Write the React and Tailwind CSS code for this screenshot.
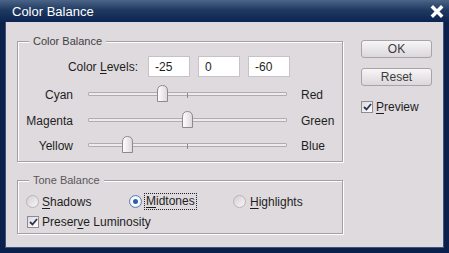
import React from 'react';

const sliders = [
  { left: 'Cyan', right: 'Red', value: -25, gap: 'mt-[8px]' },
  { left: 'Magenta', right: 'Green', value: 0, gap: 'mt-[9px]' },
  { left: 'Yellow', right: 'Blue', value: -60, gap: 'mt-[8px]' },
];

const levels = ['-25', '0', '-60'];

const Check = () => (
  <span className="w-[12px] h-[12px] shrink-0 border border-[#8f8b90] bg-[linear-gradient(135deg,#dcd9dd,#ffffff)] flex items-center justify-center">
    <svg width="9" height="8" viewBox="0 0 9 8">
      <path d="M1 4 L3.5 6.5 L8 1" fill="none" stroke="#2a3552" strokeWidth="1.8" />
    </svg>
  </span>
);

const Radio = ({ checked }) => (
  <span
    className={`w-[13px] h-[13px] shrink-0 rounded-full border flex items-center justify-center ${
      checked
        ? 'border-[#5d7fae] bg-[radial-gradient(circle,#ffffff_40%,#c9d8ee_100%)]'
        : 'border-[#b8b4b9] bg-[linear-gradient(135deg,#d4d0d5,#f6f5f6)]'
    }`}
  >
    {checked && <span className="w-[5px] h-[5px] rounded-full bg-[#2d5fae]" />}
  </span>
);

const Slider = ({ value }) => (
  <div className="relative w-[199px] h-[17px]">
    <div className="absolute left-0 right-0 top-[7px] h-[4px] border border-[#b0acb0] bg-[#eeebee] rounded-[1px]" />
    <div className="absolute left-[99px] top-[8px] w-[1px] h-[5px] bg-[#8d898d]" />
    <svg
      className="absolute top-0"
      style={{ left: 99.5 + value - 5.5 }}
      width="11"
      height="17"
      viewBox="0 0 11 17"
    >
      <defs>
        <linearGradient id="thumb" x1="0" y1="0" x2="1" y2="0">
          <stop offset="0" stopColor="#ffffff" />
          <stop offset="1" stopColor="#dcd8dc" />
        </linearGradient>
      </defs>
      <path d="M0.5 16.5 V6 Q0.5 0.5 5.5 0.5 Q10.5 0.5 10.5 6 V16.5 Z" fill="url(#thumb)" stroke="#8d898e" />
    </svg>
  </div>
);

const groupBox =
  'border border-[#a39fa4] shadow-[inset_1px_1px_0_#ffffff,1px_1px_0_#ffffff]';

export default function App() {
  return (
    <div className="w-[449px] h-[253px] bg-[#0b214b] flex flex-col font-['Liberation_Sans',Arial,sans-serif] text-[12px] text-[#1e1e1e]">
      {/* title bar */}
      <div className="h-[22px] shrink-0 flex items-center justify-between pl-[12px] pr-[5px] bg-[linear-gradient(to_bottom,#4b6487_0%,#1f3a62_45%,#0c2450_100%)]">
        <span className="text-white text-[13px] leading-none">Color Balance</span>
        <svg width="14" height="13" viewBox="0 0 14 13">
          <path d="M3 2.5 L11 10.5 M11 2.5 L3 10.5" stroke="#ffffff" strokeWidth="3.4" strokeLinecap="square" />
        </svg>
      </div>

      <div className="flex-1 mx-[5px] mb-[5px] border-x border-b border-[#3d5680] bg-[#dedadd] flex">
        {/* left column */}
        <div className="w-[337px] pl-[11px] pt-[12px]">
          <fieldset className={`w-[326px] pb-[8px] ${groupBox}`}>
            <legend className="ml-[11px] px-[4px] leading-[14px] text-[11px] text-[#444144] bg-[#dedadd]">Color Balance</legend>

            <div className="mt-[8px] flex items-center h-[21px]">
              <span className="w-[120px] text-right">
                Color <u className="underline-offset-2">L</u>evels:
              </span>
              <div className="ml-[10px] flex gap-[8px]">
                {levels.map((v, i) => (
                  <div
                    key={i}
                    className="w-[42px] h-[21px] bg-white border border-[#c6c2c7] pl-[6px] flex items-center"
                  >
                    {v}
                  </div>
                ))}
              </div>
            </div>

            {sliders.map((s) => (
              <div key={s.left} className={`${s.gap} flex items-center h-[17px]`}>
                <span className="w-[55px] text-right pt-[3px]">{s.left}</span>
                <div className="ml-[15px]">
                  <Slider value={s.value} />
                </div>
                <span className="ml-[14px] pt-[3px]">{s.right}</span>
              </div>
            ))}
          </fieldset>

          <fieldset className={`mt-[11px] w-[326px] pb-[3px] ${groupBox}`}>
            <legend className="ml-[11px] px-[4px] leading-[14px] text-[11px] text-[#5a575a] bg-[#dedadd]">Tone Balance</legend>

            <div className="mt-[6px] h-[17px] pl-[8px] flex items-center">
              <div className="w-[103px] flex items-center gap-[3px]">
                <Radio />
                <span>
                  <u className="underline-offset-2">S</u>hadows
                </span>
              </div>
              <div className="w-[104px] flex items-center gap-[2px]">
                <Radio checked />
                <span className="border border-dotted border-[#222] px-[1px] leading-[15px]">
                  <u className="underline-offset-2">M</u>idtones
                </span>
              </div>
              <div className="flex items-center gap-[4px]">
                <Radio />
                <span>
                  <u className="underline-offset-2">H</u>ighlights
                </span>
              </div>
            </div>

            <div className="mt-[4px] h-[16px] pl-[9px] flex items-center gap-[3px]">
              <Check />
              <span>
                Preser<u className="underline-offset-2">v</u>e Luminosity
              </span>
            </div>
          </fieldset>
        </div>

        {/* right column */}
        <div className="flex-1 pl-[18px] pt-[18px] flex flex-col items-start">
          <button className="w-[71px] h-[18px] rounded-[3px] border border-[#a7a3a8] bg-[linear-gradient(to_bottom,#f7f6f7,#dbd7db)] text-[#3c3c3c] flex items-center justify-center">
            OK
          </button>
          <button className="mt-[10px] w-[71px] h-[18px] rounded-[3px] border border-[#a7a3a8] bg-[linear-gradient(to_bottom,#f7f6f7,#dbd7db)] text-[#3c3c3c] flex items-center justify-center">
            Reset
          </button>
          <div className="mt-[14px] h-[14px] flex items-center gap-[3px]">
            <Check />
            <span>
              <u className="underline-offset-2">P</u>review
            </span>
          </div>
        </div>
      </div>
    </div>
  );
}
